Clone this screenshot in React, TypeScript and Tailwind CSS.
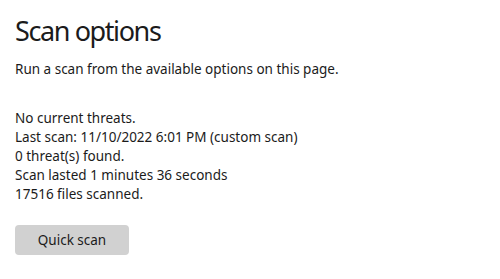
export default function App() {
  return (
    <div className="w-[500px] h-[279px] bg-white text-[#1b1b1b] pl-[15px] pt-[13px]" style={{ fontFamily: '"Segoe UI", "Noto Sans", sans-serif' }}>
      <h1 className="text-[27px] leading-[36px] font-normal tracking-[-1.4px]">Scan options</h1>
      <p className="text-[13.5px] leading-[19px] mt-[11px]">Run a scan from the available options on this page.</p>
      <div className="mt-[30px] text-[13.5px] leading-[19px]">
        <p>No current threats.</p>
        <p>Last scan: 11/10/2022 6:01 PM (custom scan)</p>
        <p>0 threat(s) found.</p>
        <p>Scan lasted 1 minutes 36 seconds</p>
        <p>17516 files scanned.</p>
      </div>
      <button className="mt-[21px] w-[114px] h-[30px] rounded-[4px] bg-[#d1d1d1] text-[13.5px] leading-[19px] block">Quick scan</button>
    </div>
  );
}
